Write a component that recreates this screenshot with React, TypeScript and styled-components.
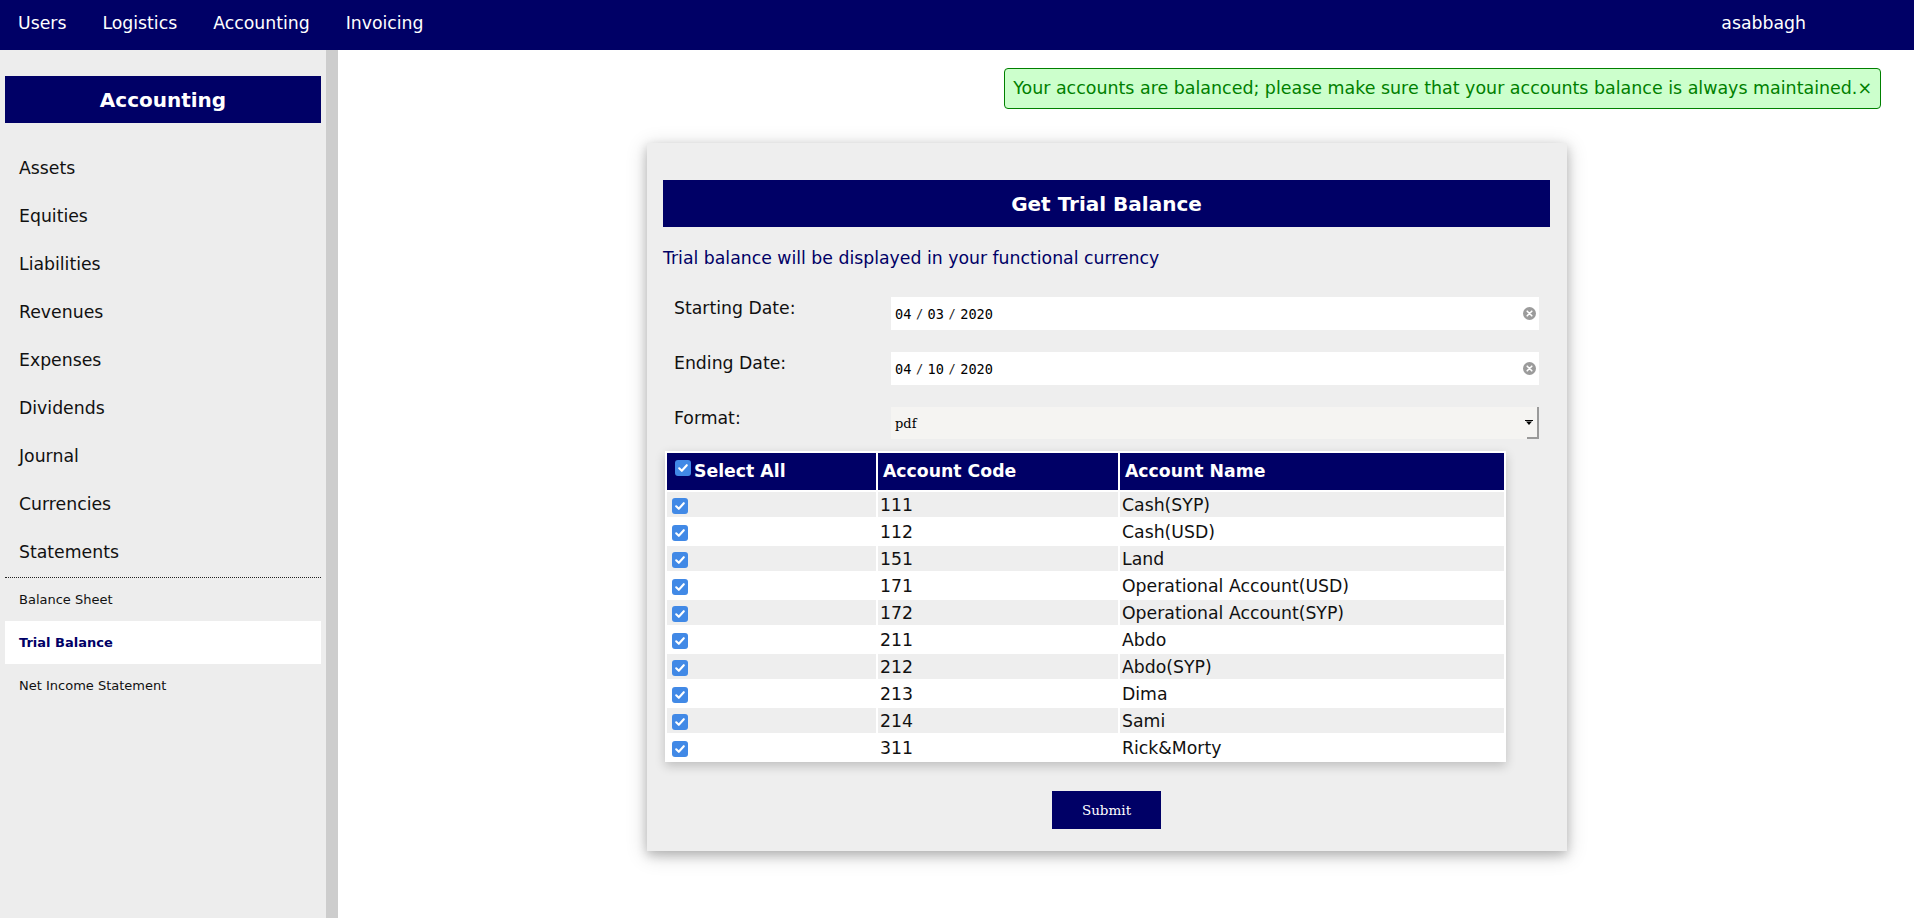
import React from 'react';
import styled, { createGlobalStyle } from 'styled-components';

const NAVY = '#000066';

const Global = createGlobalStyle`
  html, body { margin: 0; padding: 0; }
  body {
    font-family: "DejaVu Sans", Verdana, sans-serif;
    background: #ffffff;
    color: #111111;
  }
  * { box-sizing: border-box; }
`;

const Page = styled.div`
  display: flex;
  flex-direction: column;
  height: 918px;
  overflow: hidden;
`;

const TopBar = styled.nav`
  height: 50px;
  flex-shrink: 0;
  background: ${NAVY};
  display: flex;
  align-items: flex-start;
  padding-right: 90px;
`;

const NavLink = styled.a`
  color: #ffffff;
  font-size: 17.3px;
  padding: 0 18px;
  line-height: 46px;
  text-decoration: none;
`;

const Spacer = styled.div`
  flex: 1;
`;

const Body = styled.div`
  display: flex;
  flex: 1;
  min-height: 0;
`;

const Sidebar = styled.aside`
  width: 338px;
  flex-shrink: 0;
  background: #ededed;
  border-right: 12px solid #cdcdcd;
  padding: 26px 5px 0;
`;

const SideTitle = styled.h2`
  margin: 0;
  height: 47px;
  background: ${NAVY};
  color: #ffffff;
  font-size: 20px;
  font-weight: bold;
  display: flex;
  align-items: center;
  justify-content: center;
`;

const SideList = styled.ul`
  list-style: none;
  margin: 21px 0 0;
  padding: 0;
`;

const SideItem = styled.li`
  height: 48px;
  line-height: 48px;
  padding-left: 14px;
  font-size: 17.3px;
  color: #111111;
`;

const Divider = styled.hr`
  border: 0;
  border-top: 1px dotted #222222;
  margin: 1px 0 0;
  height: 0;
`;

const SubList = styled.ul`
  list-style: none;
  margin: 0;
  padding: 0;
`;

const SubItem = styled.li<{ $active?: boolean }>`
  height: 43px;
  line-height: 43px;
  padding-left: 14px;
  font-size: 13px;
  background: ${(p) => (p.$active ? '#ffffff' : 'transparent')};
  color: ${(p) => (p.$active ? NAVY : '#111111')};
  font-weight: ${(p) => (p.$active ? 'bold' : 'normal')};
`;

const Main = styled.main`
  flex: 1;
  min-width: 0;
  padding: 18px 33px 0 0;
`;

const AlertRow = styled.div`
  display: flex;
  justify-content: flex-end;
`;

const Alert = styled.div`
  height: 41px;
  line-height: 39px;
  padding: 0 8px;
  border: 1px solid #008000;
  border-radius: 4px;
  background: #ccffcc;
  color: #008000;
  font-size: 17.45px;
  white-space: nowrap;
`;

const Card = styled.section`
  width: 920px;
  margin: 34px 0 0 309px;
  background: #eeeeee;
  padding: 37px 17px 22px 16px;
  box-shadow: 0 4px 10px 0 rgba(0, 0, 0, 0.2), 0 4px 20px 0 rgba(0, 0, 0, 0.19);
`;

const CardTitle = styled.h1`
  margin: 0;
  height: 47px;
  background: ${NAVY};
  color: #ffffff;
  font-size: 20px;
  font-weight: bold;
  display: flex;
  align-items: center;
  justify-content: center;
`;

const Subtitle = styled.p`
  margin: 20px 0 0;
  font-size: 17.3px;
  line-height: 22px;
  color: ${NAVY};
`;

const FormGrid = styled.div`
  margin-top: 28px;
  padding: 0 11px;
  display: grid;
  grid-template-columns: 217px 1fr;
  row-gap: 22px;
`;

const Label = styled.label`
  font-size: 17.3px;
  line-height: 20px;
  padding-top: 1px;
  color: #111111;
`;

const DateField = styled.div`
  height: 33px;
  background: #ffffff;
  display: flex;
  align-items: center;
  justify-content: space-between;
  padding: 0 3px 0 4px;
  color: #000000;
`;

const DateValue = styled.span`
  display: inline-flex;
  align-items: center;
  font-family: "DejaVu Sans Mono", monospace;
  font-size: 13.6px;
`;

const DateSep = styled.span`
  font-family: "DejaVu Sans Mono", monospace;
  font-size: 12px;
  margin: 0 4.5px;
  color: #222222;
`;

const SelectField = styled.div`
  position: relative;
  height: 32px;
  background: #f5f4f2;
  display: flex;
  align-items: center;
  justify-content: space-between;
  padding: 0 3px 0 4px;
  font-family: "DejaVu Serif", serif;
  font-size: 13px;
  color: #000000;
  border-right: 2px solid #9a9a9a;
  &::after {
    content: '';
    position: absolute;
    right: -2px;
    bottom: 0;
    width: 12px;
    height: 2px;
    background: #9a9a9a;
  }
`;

const Table = styled.table`
  margin: 12px 0 0 2px;
  width: 841px;
  border-spacing: 2px;
  background: #ffffff;
  box-shadow: 0 4px 10px 0 rgba(0, 0, 0, 0.2);
  table-layout: fixed;
`;

const Th = styled.th<{ $w?: number }>`
  width: ${(p) => (p.$w ? `${p.$w}px` : 'auto')};
  height: 37px;
  background: ${NAVY};
  color: #ffffff;
  font-size: 17.3px;
  font-weight: bold;
  text-align: left;
  padding: 0 5px 2px;
  white-space: nowrap;
`;

const HeadInner = styled.span`
  display: inline-flex;
  align-items: center;
  gap: 3px;
`;

const Tr = styled.tr<{ $alt: boolean }>`
  background: ${(p) => (p.$alt ? '#ffffff' : '#eeeeee')};
`;

const Td = styled.td`
  height: 25px;
  padding: 0 2px;
  font-size: 17.3px;
  line-height: 20px;
  color: #111111;
  white-space: nowrap;
`;

const CheckBox = styled.span<{ $raise?: boolean }>`
  display: inline-flex;
  align-items: center;
  justify-content: center;
  width: 16px;
  height: 16px;
  border-radius: 3px;
  background: #4189e6;
  margin-left: 3px;
  vertical-align: middle;
  position: relative;
  top: ${(p) => (p.$raise ? '-3px' : '0')};
`;

const SubmitButton = styled.button`
  display: block;
  margin: 29px auto 0;
  width: 109px;
  height: 38px;
  border: 0;
  background: ${NAVY};
  color: #ffffff;
  font-family: "DejaVu Serif", serif;
  font-size: 13.5px;
  cursor: pointer;
`;

const Check = ({ raise }: { raise?: boolean }) => (
  <CheckBox $raise={raise}>
    <svg width="12" height="12" viewBox="0 0 12 12">
      <path d="M2.2 6.3 L4.8 8.8 L9.8 3.2" fill="none" stroke="#ffffff" strokeWidth="2.1" strokeLinecap="round" strokeLinejoin="round" />
    </svg>
  </CheckBox>
);

const ClearIcon = () => (
  <svg width="13" height="13" viewBox="0 0 13 13">
    <circle cx="6.5" cy="6.5" r="6.5" fill="#9b9b9b" />
    <path d="M4.2 4.2 L8.8 8.8 M8.8 4.2 L4.2 8.8" stroke="#ffffff" strokeWidth="1.6" strokeLinecap="round" />
  </svg>
);

const SelectArrow = () => (
  <svg width="8" height="6" viewBox="0 0 8 6" style={{ marginRight: 1 }}>
    <rect x="0" y="0" width="8" height="1" fill="#000" />
    <path d="M1 1.5 L7 1.5 L4 5 Z" fill="#000" />
  </svg>
);

const DateInput = ({ m, d, y }: { m: string; d: string; y: string }) => (
  <DateField>
    <DateValue>
      {m}
      <DateSep>/</DateSep>
      {d}
      <DateSep>/</DateSep>
      {y}
    </DateValue>
    <ClearIcon />
  </DateField>
);

const accounts = [
  ['111', 'Cash(SYP)'],
  ['112', 'Cash(USD)'],
  ['151', 'Land'],
  ['171', 'Operational Account(USD)'],
  ['172', 'Operational Account(SYP)'],
  ['211', 'Abdo'],
  ['212', 'Abdo(SYP)'],
  ['213', 'Dima'],
  ['214', 'Sami'],
  ['311', 'Rick&Morty'],
];

const menu = ['Assets', 'Equities', 'Liabilities', 'Revenues', 'Expenses', 'Dividends', 'Journal', 'Currencies', 'Statements'];

export default function App() {
  return (
    <>
      <Global />
      <Page>
        <TopBar>
          <NavLink>Users</NavLink>
          <NavLink>Logistics</NavLink>
          <NavLink>Accounting</NavLink>
          <NavLink>Invoicing</NavLink>
          <Spacer />
          <NavLink>asabbagh</NavLink>
        </TopBar>
        <Body>
          <Sidebar>
            <SideTitle>Accounting</SideTitle>
            <SideList>
              {menu.map((m) => (
                <SideItem key={m}>{m}</SideItem>
              ))}
            </SideList>
            <Divider />
            <SubList>
              <SubItem>Balance Sheet</SubItem>
              <SubItem $active>Trial Balance</SubItem>
              <SubItem>Net Income Statement</SubItem>
            </SubList>
          </Sidebar>
          <Main>
            <AlertRow>
              <Alert>Your accounts are balanced; please make sure that your accounts balance is always maintained.×</Alert>
            </AlertRow>
            <Card>
              <CardTitle>Get Trial Balance</CardTitle>
              <Subtitle>Trial balance will be displayed in your functional currency</Subtitle>
              <FormGrid>
                <Label>Starting Date:</Label>
                <DateInput m="04" d="03" y="2020" />
                <Label>Ending Date:</Label>
                <DateInput m="04" d="10" y="2020" />
                <Label>Format:</Label>
                <SelectField>
                  <span>pdf</span>
                  <SelectArrow />
                </SelectField>
              </FormGrid>
              <Table>
                <thead>
                  <tr>
                    <Th $w={209}>
                      <HeadInner>
                        <Check raise />
                        Select All
                      </HeadInner>
                    </Th>
                    <Th $w={240}>Account Code</Th>
                    <Th>Account Name</Th>
                  </tr>
                </thead>
                <tbody>
                  {accounts.map(([code, name], i) => (
                    <Tr key={code} $alt={i % 2 === 1}>
                      <Td>
                        <Check />
                      </Td>
                      <Td>{code}</Td>
                      <Td>{name}</Td>
                    </Tr>
                  ))}
                </tbody>
              </Table>
              <SubmitButton>Submit</SubmitButton>
            </Card>
          </Main>
        </Body>
      </Page>
    </>
  );
}
